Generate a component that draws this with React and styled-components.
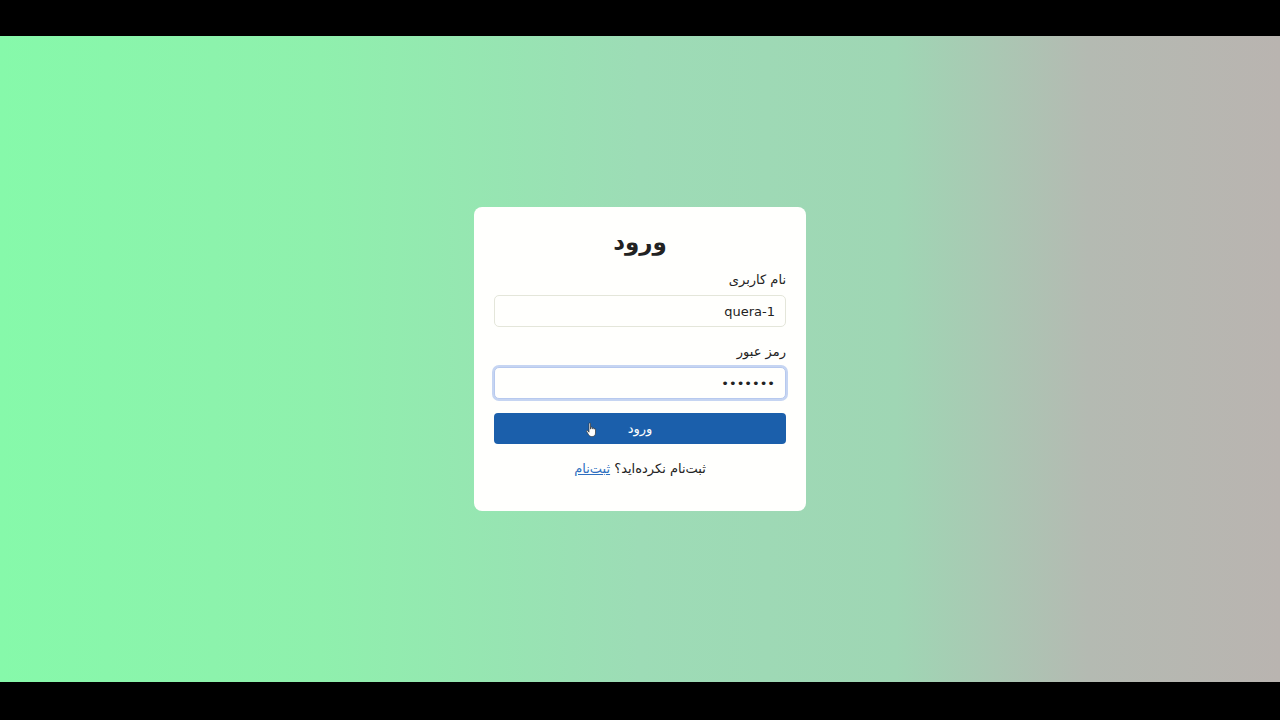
import styled, { createGlobalStyle } from "styled-components";

const GlobalStyle = createGlobalStyle`
  * { box-sizing: border-box; }
  html, body {
    margin: 0;
    padding: 0;
    background: #000;
    font-family: "DejaVu Sans", "Noto Sans", sans-serif;
  }
`;

const Screen = styled.div`
  display: flex;
  flex-direction: column;
  height: 720px;
  padding: 36px 0 38px;
  background: #000;
`;

const Stage = styled.main`
  position: relative;
  flex: 1;
  display: flex;
  align-items: center;
  justify-content: center;
  background: linear-gradient(
    to right,
    #86f9aa 0%,
    #8ff0ad 25%,
    #9ddcb6 50%,
    #9fd6b4 70%,
    #b4bab2 85%,
    #b9b4b0 100%
  );
`;

const Card = styled.form`
  direction: rtl;
  width: 332px;
  padding: 19px 20px 32px;
  background: #fffffd;
  border-radius: 8px;
  display: flex;
  flex-direction: column;
`;

const Title = styled.h2`
  margin: 0 0 12px;
  text-align: center;
  font-size: 23px;
  font-weight: 700;
  color: #222;
  line-height: 32px;
`;

const Label = styled.label`
  font-size: 13px;
  color: #222;
  line-height: 20px;
  margin-bottom: 5px;
`;

const Input = styled.input`
  width: 100%;
  height: 32px;
  padding: 0 10px;
  border: 1px solid ${(p) => (p.$focus ? "#b7c9ee" : "#e4e6da")};
  border-radius: 5px;
  background: #fffffd;
  font-family: inherit;
  font-size: 13px;
  color: #222;
  direction: rtl;
  outline: none;
  box-shadow: ${(p) => (p.$focus ? "0 0 0 2px #c6d5f2" : "none")};
  margin-bottom: ${(p) => p.$mb || "15px"};
`;

const Button = styled.button`
  position: relative;
  height: 31px;
  border: none;
  border-radius: 4px;
  background: #1b5fab;
  color: #fff;
  font-family: inherit;
  font-size: 13px;
  cursor: pointer;
`;

const Footer = styled.p`
  margin: 15px 0 0;
  text-align: center;
  font-size: 13px;
  color: #222;
  line-height: 20px;
`;

const Link = styled.a`
  color: #2f6fc0;
  text-decoration: underline;
`;

const Cursor = styled.svg`
  position: absolute;
  left: 92px;
  top: 9px;
`;

export default function App() {
  return (
    <>
      <GlobalStyle />
      <Screen>
        <Stage>
          <Card onSubmit={(e) => e.preventDefault()}>
            <Title>ورود</Title>
            <Label>نام کاربری</Label>
            <Input defaultValue="quera-1" />
            <Label>رمز عبور</Label>
            <Input type="password" defaultValue="1234567" $focus $mb="14px" />
            <Button type="submit">
              ورود
              <Cursor width="12" height="16" viewBox="0 0 12 16">
                <path
                  d="M3 1.5c0-.8 1.5-.8 1.5 0V7l.5-.2V5.5c0-.8 1.4-.8 1.4 0v1.3l.4-.1c0-.8 1.4-.8 1.4 0v.5c0-.7 1.3-.7 1.3 0V11c0 2-1.2 3.5-3.2 3.5H5.5C4 14.5 3 13.5 2.3 12.3L.6 9.4c-.4-.7.6-1.3 1.1-.7L3 10.2z"
                  fill="#fff"
                  stroke="#333"
                  strokeWidth="0.7"
                />
              </Cursor>
            </Button>
            <Footer>
              ثبت‌نام نکرده‌اید؟ <Link href="#">ثبت‌نام</Link>
            </Footer>
          </Card>
        </Stage>
      </Screen>
    </>
  );
}
